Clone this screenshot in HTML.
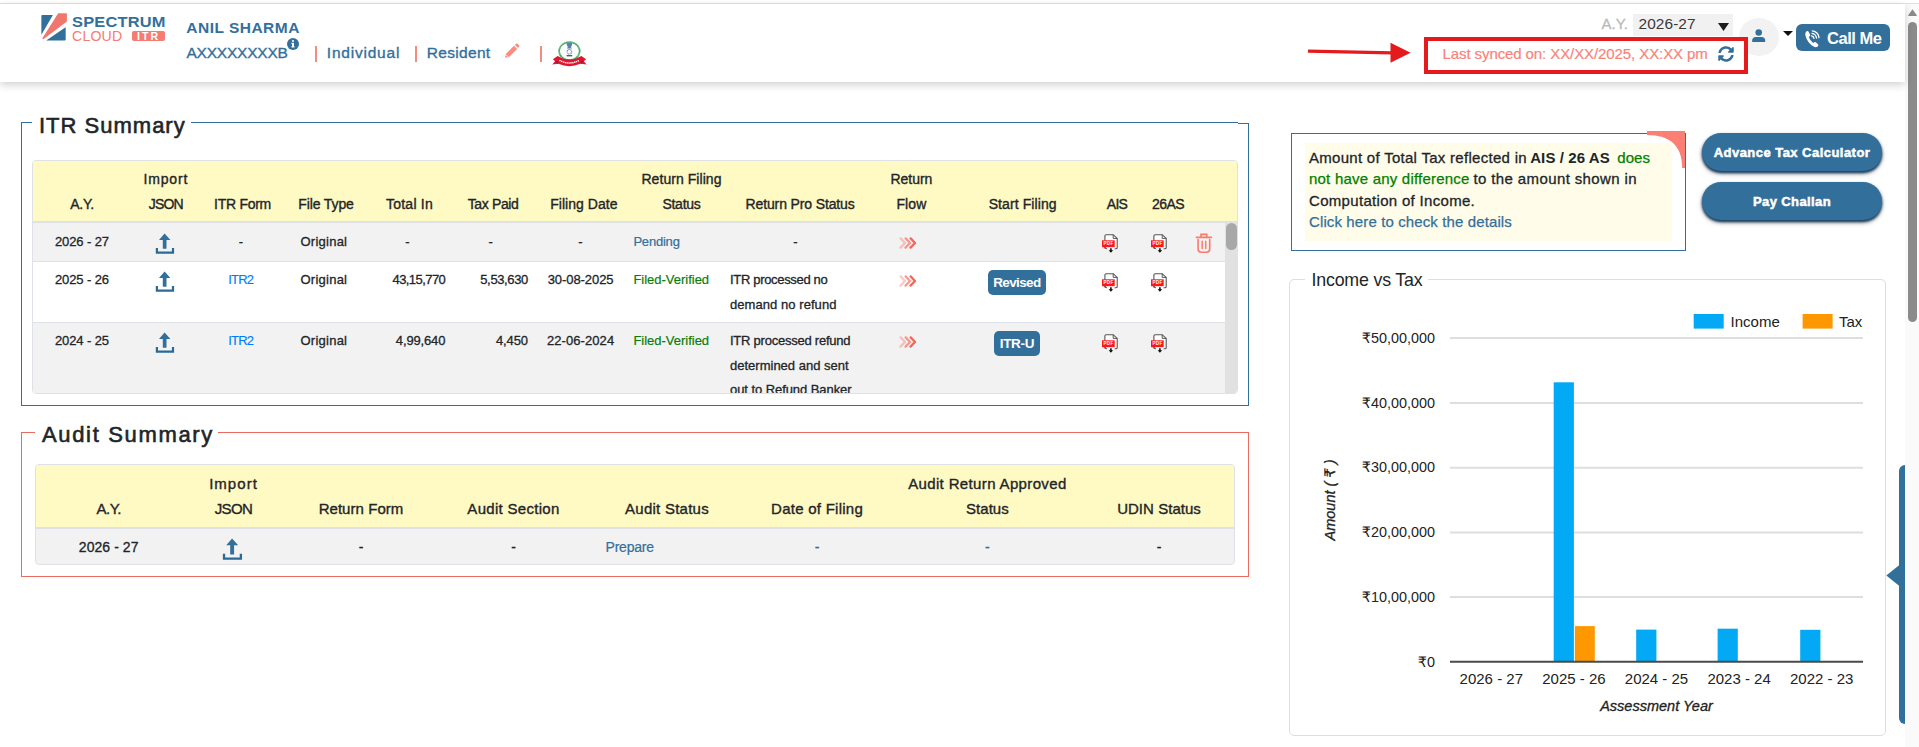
<!DOCTYPE html>
<html lang="en">
<head>
<meta charset="utf-8">
<title>Spectrum Cloud ITR - Dashboard</title>
<style>
*{box-sizing:border-box;margin:0;padding:0}
html,body{width:1919px;height:747px;overflow:hidden;background:#fff}
body{position:relative;font-family:"Liberation Sans","DejaVu Sans",sans-serif;color:#212529;font-size:14px}
.a{position:absolute}
.t{position:absolute;white-space:nowrap;line-height:1}
.sb{-webkit-text-stroke:0.35px currentColor}
.blue{color:#336f9b}
.coral{color:#f47c72}
svg{position:absolute;overflow:visible}
/* header */
#topline{left:0;top:3px;width:1919px;height:1px;background:#dfe1df}
#header{left:0;top:4px;width:1905px;height:78px;background:#fff;box-shadow:0 3px 8px rgba(0,0,0,.18)}
#vscroll{left:1905px;top:4px;width:14px;height:743px;background:#fafafa}
#vthumb{left:1908px;top:22px;width:9px;height:300px;border-radius:5px;background:#8b8b8b}
/* fieldsets */
.fs{position:absolute;border:1px solid #336f9b}
.lg{position:absolute;background:#fff;white-space:nowrap;line-height:1;color:#212529}
.th{position:absolute;white-space:nowrap;line-height:1;font-size:14px;color:#212529;transform:translateX(-50%);-webkit-text-stroke:0.35px currentColor}
.td{position:absolute;white-space:nowrap;line-height:1;font-size:13px;color:#212529;-webkit-text-stroke:0.3px currentColor}
.c{transform:translateX(-50%)}
.r{transform:translateX(-100%)}
.btn{position:absolute;background:#336f9b;color:#fff;border-radius:5px;font-weight:bold;text-align:center;white-space:nowrap}
</style>
</head>
<body>
<div class="a" id="topline"></div>
<div class="a" id="vscroll"></div>
<svg style="left:1908px;top:9px" width="9" height="7" viewBox="0 0 9 7"><path d="M4.5 0.3 L8.8 6.3 Q9 7 8.3 7 L0.7 7 Q0 7 0.2 6.3 Z" fill="#8b8b8b"/></svg>
<div class="a" id="vthumb"></div>

<!-- HEADER -->
<div class="a" id="header"></div>
<div id="hdr">
<!-- logo -->
<svg style="left:41px;top:13px" width="27" height="28" viewBox="0 0 27 28">
  <path d="M1.2 1.9 L11.9 1.9 L0.4 21.8 L0.4 2.7 Q0.4 1.9 1.2 1.9 Z" fill="#336f9b"/>
  <path d="M17.2 0.2 L25 0.2 Q25.9 0.2 25.9 1.1 L25.9 8.6 L2.4 26.2 L1.2 25.6 Z" fill="#f0776d"/>
  <path d="M24.2 14.4 Q24.7 14.2 24.7 14.9 L24.7 26.5 Q24.7 27.4 23.8 27.4 L5.2 27.4 Z" fill="#336f9b"/>
</svg>
<span class="t" id="lg1" style="left:72.2px;top:14.1px;font-size:15px;font-weight:bold;color:#336f9b;letter-spacing:0.2px;transform:scaleX(1.093);transform-origin:0 0">SPECTRUM</span>
<span class="t" id="lg2" style="left:72px;top:28.9px;font-size:14.4px;color:#f47c72;letter-spacing:0.2px;transform:scaleX(0.98);transform-origin:0 0">CLOUD</span>
<div class="a" style="left:132px;top:31px;width:33px;height:10px;border-radius:2px;background:#f47c72"></div>
<span class="t" id="lg3" style="left:137px;top:30.8px;font-size:10.6px;font-weight:bold;color:#fff;letter-spacing:2.1px">ITR</span>

<span class="t blue" id="nm" style="left:186.3px;top:20.1px;font-size:15.5px;font-weight:bold;letter-spacing:0.489px">ANIL SHARMA</span>
<span class="t blue sb" id="pan" style="left:186.5px;top:44.8px;font-size:15.5px;letter-spacing:-0.221px">AXXXXXXXXB</span>
<svg style="left:287px;top:38px" width="12" height="12" viewBox="0 0 12 12"><circle cx="6" cy="6" r="6" fill="#336f9b"/><rect x="5" y="5" width="2" height="4.2" fill="#fff"/><rect x="4.3" y="8.4" width="3.4" height="1" fill="#fff"/><rect x="4.3" y="4.8" width="2" height="1" fill="#fff"/><circle cx="6" cy="3" r="1.1" fill="#fff"/></svg>
<div class="a" style="left:315px;top:46px;width:2px;height:16px;background:#f58a80"></div>
<span class="t blue sb" id="ind" style="left:326.8px;top:45.0px;font-size:15.5px;letter-spacing:0.788px">Individual</span>
<div class="a" style="left:415px;top:46px;width:2px;height:16px;background:#f58a80"></div>
<span class="t blue sb" id="res" style="left:426.7px;top:45.0px;font-size:15.5px;letter-spacing:0.331px">Resident</span>
<svg style="left:503.5px;top:42.5px" width="16" height="16" viewBox="0 0 17 17"><path d="M1 15.6 L2 11.6 L10.6 3 L14 6.4 L5.4 15 Z M11.6 2 L12.8 0.8 Q13.6 0.2 14.4 0.9 L16 2.5 Q16.7 3.3 16 4.1 L14.9 5.3 Z" fill="#fa8c82"/><path d="M2.2 12.6 L4.4 14.8" stroke="#fff" stroke-width="0.9"/></svg>
<div class="a" style="left:540px;top:46px;width:2px;height:16px;background:#f58a80"></div>
<!-- emblem -->
<svg style="left:552px;top:41px" width="35" height="25" viewBox="0 0 35 25">
  <ellipse cx="17.4" cy="10.1" rx="10.2" ry="8.9" fill="#fff" stroke="#2fa052" stroke-width="1.8" stroke-dasharray="0.9 0.25"/>
  <path d="M14.6 1.8 Q15.6 1.2 16.3 2 Q17.4 1.1 18.5 2 Q19.2 1.2 20.2 1.8 L20 4.6 L19.2 5 L19.2 6.6 L20 7.4 L14.8 7.4 L15.6 6.6 L15.6 5 L14.8 4.6 Z" fill="#5f7fb2"/>
  <circle cx="17.4" cy="10.7" r="2.3" fill="none" stroke="#6686b8" stroke-width="1.2" stroke-dasharray="0.8 0.4"/>
  <rect x="14.6" y="14.2" width="5.6" height="1.1" fill="#333"/>
  <path d="M0.9 18.3 L5.6 15 Q17.4 22.2 29.4 15 L34 18.3 L31.8 20.2 L34.6 23.4 L28.4 22.8 Q17.4 27.6 6.4 22.8 L0.3 23.4 L3.1 20.2 Z" fill="#e3142d"/>
  <path d="M3.3 20.4 L6.4 22.8 L5.8 19.9 Z M31.6 20.4 L28.4 22.8 L29.2 19.9 Z" fill="#1d3f8f"/>
  <path d="M7.4 19.3 Q17.4 24.6 27.4 19.3" fill="none" stroke="#fff" stroke-width="1.5" stroke-dasharray="1.3 0.6"/>
</svg>

<!-- header right -->
<svg style="left:1306px;top:40px" width="108" height="26" viewBox="0 0 108 26"><path d="M2 9.4 L86 11.2 L86 14.6 L2 12.8 Z" fill="#e41a1c"/><path d="M84.5 2.7 L104.6 12.7 L84.5 22.8 Z" fill="#e41a1c"/></svg>
<div class="a" style="left:1739px;top:18px;width:40px;height:38px;border-radius:50%;background:#f2f2f2"></div>
<div class="a" style="left:1424px;top:37px;width:324px;height:37px;border:4px solid #e41a1c;background:#fff"></div>
<span class="t" id="sync" style="left:1442.5px;top:45.6px;font-size:15px;letter-spacing:-0.091px;color:#f88379;-webkit-text-stroke:0.2px #f88379">Last synced on: XX/XX/2025, XX:XX pm</span>
<svg style="left:1717.5px;top:45.5px" width="16" height="16" viewBox="0 0 512 512"><path fill="#336f9b" d="M370.7 133.300C339.500 104 298.900 88 255.800 88c-77.500 .1-144.300 53.200-162.800 126.900-1.300 5.400-6.100 9.200-11.700 9.200H24.100c-7.500 0-13.200-6.800-11.800-14.200C33.900 94.900 134.800 8 256 8c66.400 0 126.800 26.100 171.300 68.700L463 41C478.100 25.900 504 36.600 504 57.900V192c0 13.300-10.700 24-24 24H345.900c-21.400 0-32.100-25.900-17-41l41.800-41.700zM32 296h134.100c21.400 0 32.100 25.900 17 41l-41.800 41.800c31.300 29.300 71.800 45.300 114.900 45.300 77.400-.1 144.300-53.100 162.800-126.800 1.300-5.400 6.100-9.200 11.700-9.200h57.300c7.500 0 13.200 6.800 11.800 14.200C478.100 417.100 377.200 504 256 504c-66.400 0-126.800-26.100-171.300-68.700L49 471c-15.100 15.100-41 4.400-41-16.900V320c0-13.300 10.700-24 24-24z"/></svg>

<span class="t" id="ay" style="left:1601.5px;top:15.9px;font-size:15px;color:#b9b9b9;-webkit-text-stroke:0.3px #b9b9b9">A.Y.</span>
<div class="a" style="left:1633px;top:14px;width:100px;height:22px;background:#f1f1f1"></div>
<span class="t" id="aysel" style="left:1638.5px;top:15.8px;font-size:15.4px;color:#3a3a3a;letter-spacing:0.1px">2026-27</span>
<svg style="left:1718px;top:23px" width="11" height="8" viewBox="0 0 11 8"><path d="M0 0 L11 0 L5.5 8 Z" fill="#1c1c1c"/></svg>
<svg style="left:1752px;top:29px" width="13.4" height="13.6" viewBox="0 0 14 14"><circle cx="7" cy="3.6" r="3.4" fill="#336f9b"/><path d="M0.2 13.6 L0.2 12 Q0.2 8.2 4.2 8.2 L9.8 8.2 Q13.8 8.2 13.8 12 L13.8 13.6 Z" fill="#336f9b"/></svg>
<svg style="left:1783px;top:31px" width="10" height="5" viewBox="0 0 10 5"><path d="M0 0 L10 0 L5 5 Z" fill="#111"/></svg>
<div class="btn" style="left:1796px;top:24px;width:94px;height:27px;border-radius:6px"></div>
<svg style="left:1804.3px;top:29.6px" width="17" height="18" viewBox="0 0 17 18" fill="none">
  <path d="M2.2 1.6 Q3.6 0.2 4.6 1.8 L6 4.4 Q6.5 5.5 5.5 6.4 L4.7 7.1 Q6 10.6 9.2 13 L10.2 12.3 Q11.2 11.6 12.1 12.4 L14 14.2 Q15 15.4 13.7 16.5 Q11.9 17.9 9.6 16.6 Q3.4 12.8 1.5 6 Q0.8 3.1 2.2 1.6 Z" fill="#fff"/>
  <path d="M7.6 5.8 Q9.6 6.3 10 8.4" stroke="#fff" stroke-width="1.3" stroke-linecap="round"/>
  <path d="M8 3.3 Q11.9 4 12.5 8" stroke="#fff" stroke-width="1.3" stroke-linecap="round"/>
  <path d="M8.3 0.8 Q14.2 1.6 15 7.6" stroke="#fff" stroke-width="1.3" stroke-linecap="round"/>
</svg>
<span class="t" id="callme" style="left:1827.1px;top:29.6px;font-size:16.5px;font-weight:bold;color:#fff;letter-spacing:-0.5px">Call Me</span>
</div>

<svg width="0" height="0" style="left:0;top:0"><defs>
<symbol id="up" viewBox="0 0 20 21"><path d="M9.6 0.5 L15.4 7 L11.5 7 L11.5 15.7 L7.8 15.7 L7.8 7 L4 7 Z" fill="#336f9b"/><path d="M1.9 15 L1.9 19.6 L18 19.6 L18 15" fill="none" stroke="#2a6a98" stroke-width="2.2"/></symbol>
<symbol id="chev" viewBox="0 0 18 12"><g fill="none" stroke="#f4675a" stroke-width="2.3" stroke-linecap="round" stroke-linejoin="round"><path d="M1.7 1.4 L6 6 L1.5 10.6" opacity=".35"/><path d="M6.7 1.4 L11 6 L6.5 10.6" opacity=".65"/><path d="M11.7 1.4 L16 6 L11.5 10.6"/></g></symbol>
<symbol id="pdf" viewBox="0 0 18 20"><path d="M3.9 15.6 L3.9 3 Q3.9 1.7 5.2 1.7 L12.2 1.7 L16.2 5.4 L16.2 14.4 Q16.2 15.7 14.9 15.7 L13.6 15.7" fill="#fff" stroke="#555" stroke-width="1.1"/><path d="M12.2 1.7 L12.2 5.4 L16.2 5.4" fill="none" stroke="#555" stroke-width="1"/><path d="M3.9 13.5 Q3.9 15.7 5.9 15.7" fill="none" stroke="#555" stroke-width="1.1"/><rect x="1" y="7.3" width="12.7" height="6.9" fill="#ff1616"/><text x="7.5" y="12.4" font-family="Liberation Sans, sans-serif" font-size="4.5" font-weight="bold" fill="#fff" text-anchor="middle" letter-spacing="0.3">PDF</text><path d="M9.1 15.2 h1.6 v2 h1.5 l-2.3 2.6 l-2.3 -2.6 h1.5 z" fill="#111"/></symbol>
<symbol id="trash" viewBox="0 0 18 20"><g fill="none" stroke="#fa7a6c" stroke-width="1.6" stroke-linecap="round"><path d="M1.4 4.4 L16.4 4.4"/><path d="M6 4.2 L6 1.4 L11.8 1.4 L11.8 4.2" stroke-linecap="butt"/><path d="M3.1 6.6 L3.1 16 Q3.1 19.2 6.3 19.2 L11.5 19.2 Q14.7 19.2 14.7 16 L14.7 6.6"/><path d="M7.2 8.2 L7.2 15.4 M10.7 8.2 L10.7 15.4" stroke-width="1.5"/></g></symbol>
</defs></svg>

<!-- ITR SUMMARY -->
<div class="fs" style="left:21px;top:122px;width:1228px;height:284px"></div>
<div class="a" style="left:1238px;top:122px;width:11px;height:1px;background:#fff"></div><div class="a" style="left:1238px;top:123px;width:11px;height:1px;background:#336f9b"></div>
<div class="lg sb" id="itrlg" style="left:32px;top:107.3px;width:159px;height:32px;font-size:22px;padding:7.6px 0 0 7px;-webkit-text-stroke:0.6px #212529;letter-spacing:1.002px">ITR Summary</div>
<div class="a" id="itrtbl" style="left:32px;top:160px;width:1206px;height:234px;border:1px solid #dee2e6;border-radius:4px;overflow:hidden;background:#fff">
  <div class="a" style="left:0;top:0;width:1206px;height:60px;background:#fff9c4"></div>
  <div class="a" style="left:0;top:60px;width:1206px;height:2px;background:#dee2e6"></div>
  <div class="a" style="left:0;top:62px;width:1193px;height:38px;background:#f2f2f2"></div>
  <div class="a" style="left:0;top:100px;width:1193px;height:1px;background:#dee2e6"></div>
  <div class="a" style="left:0;top:161px;width:1193px;height:1px;background:#dee2e6"></div>
  <div class="a" style="left:0;top:162px;width:1193px;height:72px;background:#f2f2f2"></div>
  <div class="a" style="left:1192px;top:61px;width:13px;height:173px;background:#e1e1e1"></div>
  <div class="a" style="left:1192.5px;top:61.7px;width:11.5px;height:27px;border-radius:6px;background:#a8a8a8"></div>
</div>
<span class="th" id="h0b" style="left:82.1px;top:197px;letter-spacing:-0.252px">A.Y.</span>
<span class="th" id="h1a" style="left:165.8px;top:171.9px;letter-spacing:0.842px">Import</span>
<span class="th" id="h1b" style="left:165.8px;top:197px;letter-spacing:-0.781px">JSON</span>
<span class="th" id="h2b" style="left:242.5px;top:197px;letter-spacing:-0.273px">ITR Form</span>
<span class="th" id="h3b" style="left:326px;top:197px;letter-spacing:-0.106px">File Type</span>
<span class="th" id="h4b" style="left:409.5px;top:197px;letter-spacing:0.237px">Total In</span>
<span class="th" id="h5b" style="left:493.1px;top:197px;letter-spacing:-0.358px">Tax Paid</span>
<span class="th" id="h6b" style="left:583.9px;top:197px;letter-spacing:0.048px">Filing Date</span>
<span class="th" id="h7a" style="left:681.5px;top:171.9px;letter-spacing:0.06px">Return Filing</span>
<span class="th" id="h7b" style="left:681.5px;top:197px;letter-spacing:-0.241px">Status</span>
<span class="th" id="h8b" style="left:800.1px;top:197px;letter-spacing:-0.13px">Return Pro Status</span>
<span class="th" id="h9a" style="left:911.4px;top:171.9px;letter-spacing:-0.006px">Return</span>
<span class="th" id="h9b" style="left:911.4px;top:197px;letter-spacing:0.079px">Flow</span>
<span class="th" id="h10b" style="left:1022.7px;top:197px;letter-spacing:0.089px">Start Filing</span>
<span class="th" id="h11b" style="left:1117px;top:197px;letter-spacing:-0.739px">AIS</span>
<span class="th" id="h12b" style="left:1168px;top:197px;letter-spacing:-0.517px">26AS</span>
<div class="a" id="itrbody" style="left:34px;top:223px;width:1191px;height:170px;overflow:hidden"><div class="a" style="left:-34px;top:-223px;width:1300px;height:500px">
<span class="td c" id="r0ay" style="left:82px;top:235.4px;letter-spacing:-0.105px">2026 - 27</span>
<svg style="left:154.9px;top:232.5px" width="20" height="21"><use href="#up"/></svg>
<span class="td c" style="left:241px;top:235.4px">-</span>
<span class="td c" id="r0ft" style="left:323.9px;top:235.4px;letter-spacing:0.243px">Original</span>
<span class="td c" style="left:407.5px;top:235.4px">-</span><span class="td c" style="left:490.7px;top:235.4px">-</span><span class="td c" style="left:580.4px;top:235.4px">-</span>
<span class="td" id="r0st" style="left:633.4px;top:235.4px;color:#336f9b;-webkit-text-stroke:0.2px #336f9b;letter-spacing:-0.203px">Pending</span>
<span class="td c" style="left:795.4px;top:235.4px">-</span>
<svg style="left:899.3px;top:237.0px" width="18" height="12"><use href="#chev"/></svg>
<svg style="left:1101.1px;top:232.7px" width="18" height="20"><use href="#pdf"/></svg>
<svg style="left:1150.2px;top:232.7px" width="18" height="20"><use href="#pdf"/></svg>
<svg style="left:1195px;top:232.8px" width="18" height="20"><use href="#trash"/></svg>
<span class="td c" id="r1ay" style="left:82px;top:273.0px;letter-spacing:-0.105px">2025 - 26</span>
<svg style="left:154.9px;top:271.3px" width="20" height="21"><use href="#up"/></svg>
<span class="td c" id="r1form" style="left:240.8px;top:273.0px;color:#007bff;-webkit-text-stroke:0.15px #007bff;letter-spacing:-0.791px">ITR2</span>
<span class="td c" id="r1ft" style="left:323.9px;top:273.0px;letter-spacing:0.243px">Original</span>
<span class="td r" id="r1tin" style="left:445.3px;top:273.0px;letter-spacing:-0.555px">43,15,770</span><span class="td r" id="r1tax" style="left:528px;top:273.0px;letter-spacing:-0.358px">5,53,630</span><span class="td c" id="r1dt" style="left:580.6px;top:273.0px;letter-spacing:-0.067px">30-08-2025</span>
<span class="td" id="r1st" style="left:633.4px;top:273.0px;color:#0a7d0a;-webkit-text-stroke:0.2px #0a7d0a;letter-spacing:-0.013px">Filed-Verified</span>
<span class="td" id="r1p0" style="left:730px;top:273.0px;letter-spacing:-0.327px">ITR processed no</span>
<span class="td" id="r1p1" style="left:730px;top:297.55px;letter-spacing:0.058px">demand no refund</span>
<svg style="left:899.3px;top:274.6px" width="18" height="12"><use href="#chev"/></svg>
<div class="btn" id="r1btn" style="left:987.6px;top:270px;width:58.6px;height:25px;border-radius:5px;font-size:13.5px;line-height:26.2px"><span id="b1" style="letter-spacing:-0.63px">Revised</span></div>
<svg style="left:1101.1px;top:271.5px" width="18" height="20"><use href="#pdf"/></svg>
<svg style="left:1150.2px;top:271.5px" width="18" height="20"><use href="#pdf"/></svg>
<span class="td c" id="r2ay" style="left:82px;top:334.0px;letter-spacing:-0.105px">2024 - 25</span>
<svg style="left:154.9px;top:332.4px" width="20" height="21"><use href="#up"/></svg>
<span class="td c" id="r2form" style="left:240.8px;top:334.0px;color:#007bff;-webkit-text-stroke:0.15px #007bff;letter-spacing:-0.791px">ITR2</span>
<span class="td c" id="r2ft" style="left:323.9px;top:334.0px;letter-spacing:0.243px">Original</span>
<span class="td r" id="r2tin" style="left:445.3px;top:334.0px;letter-spacing:-0.144px">4,99,640</span><span class="td r" id="r2tax" style="left:528px;top:334.0px;letter-spacing:-0.087px">4,450</span><span class="td c" id="r2dt" style="left:580.6px;top:334.0px;letter-spacing:0.067px">22-06-2024</span>
<span class="td" id="r2st" style="left:633.4px;top:334.0px;color:#0a7d0a;-webkit-text-stroke:0.2px #0a7d0a;letter-spacing:-0.013px">Filed-Verified</span>
<span class="td" id="r2p0" style="left:730px;top:334.0px;letter-spacing:-0.238px">ITR processed refund</span>
<span class="td" id="r2p1" style="left:730px;top:358.55px;letter-spacing:0.004px">determined and sent</span>
<span class="td" id="r2p2" style="left:730px;top:383.1px;letter-spacing:-0.066px">out to Refund Banker</span>
<svg style="left:899.3px;top:335.6px" width="18" height="12"><use href="#chev"/></svg>
<div class="btn" id="r2btn" style="left:993.6px;top:331px;width:46.7px;height:25px;border-radius:5px;font-size:13.5px;line-height:26.2px"><span id="b2" style="letter-spacing:-0.3px">ITR-U</span></div>
<svg style="left:1101.1px;top:332.59999999999997px" width="18" height="20"><use href="#pdf"/></svg>
<svg style="left:1150.2px;top:332.59999999999997px" width="18" height="20"><use href="#pdf"/></svg>
</div></div>

<!-- AUDIT SUMMARY -->
<div class="fs" style="left:21px;top:432px;width:1228px;height:145px;border-color:#ea6b60"></div>
<div class="lg sb" id="audlg" style="left:35px;top:416.5px;width:183px;height:32px;font-size:22px;padding:7.6px 0 0 7px;-webkit-text-stroke:0.6px #212529;letter-spacing:1.659px">Audit Summary</div>
<div class="a" id="audtbl" style="left:35px;top:464px;width:1200px;height:101px;border:1px solid #dee2e6;border-radius:4px;overflow:hidden;background:#f2f2f2">
  <div class="a" style="left:0;top:0;width:1200px;height:62px;background:#fff9c4"></div>
  <div class="a" style="left:0;top:62px;width:1200px;height:2px;background:#dee2e6"></div>
</div>
<span class="th" id="ah0b" style="left:108.7px;top:501.3px;font-size:15px;letter-spacing:-0.474px">A.Y.</span>
<span class="th" id="ah1a" style="left:233.5px;top:476.3px;font-size:15px;letter-spacing:1.037px">Import</span>
<span class="th" id="ah1b" style="left:233.5px;top:501.3px;font-size:15px;letter-spacing:-0.572px">JSON</span>
<span class="th" id="ah2b" style="left:361px;top:501.3px;font-size:15px;letter-spacing:0.051px">Return Form</span>
<span class="th" id="ah3b" style="left:513.5px;top:501.3px;font-size:15px;letter-spacing:0.301px">Audit Section</span>
<span class="th" id="ah4b" style="left:667px;top:501.3px;font-size:15px;letter-spacing:0.255px">Audit Status</span>
<span class="th" id="ah5b" style="left:817.1px;top:501.3px;font-size:15px;letter-spacing:0.256px">Date of Filing</span>
<span class="th" id="ah6a" style="left:987.4px;top:476.3px;font-size:15px;letter-spacing:0.358px">Audit Return Approved</span>
<span class="th" id="ah6b" style="left:987.4px;top:501.3px;font-size:15px;letter-spacing:0.034px">Status</span>
<span class="th" id="ah7b" style="left:1159px;top:501.3px;font-size:15px;letter-spacing:0.034px">UDIN Status</span>
<span class="td c" id="a0ay" style="left:108.7px;top:540px;font-size:14px;letter-spacing:0.066px">2026 - 27</span>
<svg style="left:222.4px;top:537.9px" width="21" height="22"><use href="#up"/></svg>
<span class="td c" style="left:361px;top:540px;font-size:14px">-</span><span class="td c" style="left:513.5px;top:540px;font-size:14px">-</span>
<span class="td" id="a0prep" style="left:605.6px;top:540px;font-size:14px;color:#336f9b;-webkit-text-stroke:0.2px #336f9b;letter-spacing:-0.235px">Prepare</span>
<span class="td c" style="left:817px;top:540px;font-size:14px;color:#336f9b">-</span><span class="td c" style="left:987.4px;top:540px;font-size:14px;color:#336f9b">-</span><span class="td c" style="left:1159px;top:540px;font-size:14px">-</span>

<!-- RIGHT PANEL -->
<div class="a" style="left:1291px;top:133px;width:395px;height:118px;border:1px solid #336f9b;background:#fff"></div>
<div class="a" style="left:1305px;top:143px;width:367px;height:98px;background:#fffce9"></div>
<svg style="left:1647px;top:131px" width="38" height="37" viewBox="0 0 38 37"><path d="M0 0 L38 0 L38 37 L35.2 37 C35.2 15.2 23.4 4.1 0 4.1 Z" fill="#fb7f73"/></svg>
<span class="t" id="i1a" style="left:1309px;top:149.5px;font-size:15px;-webkit-text-stroke:0.3px #212529;letter-spacing:0.286px">Amount of Total Tax reflected in</span>
<span class="t" id="i1b" style="left:1530.2px;top:149.5px;font-size:15px;font-weight:bold;letter-spacing:0.096px">AIS / 26 AS</span>
<span class="t" id="i1c" style="left:1617.2px;top:149.5px;font-size:15px;color:#008000;-webkit-text-stroke:0.25px #008000;letter-spacing:0.123px">does</span>
<span class="t" id="i2a" style="left:1309px;top:170.9px;font-size:15px;color:#008000;-webkit-text-stroke:0.25px #008000;letter-spacing:0.215px">not have any difference</span>
<span class="t" id="i2b" style="left:1473.5px;top:170.9px;font-size:15px;-webkit-text-stroke:0.3px #212529;letter-spacing:0.381px">to the amount shown in</span>
<span class="t" id="i3" style="left:1309px;top:192.6px;font-size:15px;-webkit-text-stroke:0.3px #212529;letter-spacing:0.311px">Computation of Income.</span>
<span class="t" id="i4" style="left:1309px;top:213.8px;font-size:15px;color:#336f9b;-webkit-text-stroke:0.25px #336f9b;letter-spacing:0.118px">Click here to check the details</span>

<div class="btn" style="left:1702px;top:133px;width:180px;height:38px;border-radius:19px;box-shadow:0 2px 2.5px 0.3px #193f60,0 3px 5px rgba(0,0,0,.28);font-size:13px;line-height:39.6px;-webkit-text-stroke:0.5px #fff"><span id="bt1" style="letter-spacing:0.465px">Advance Tax Calculator</span></div>
<div class="btn" style="left:1702px;top:182px;width:180px;height:38px;border-radius:19px;box-shadow:0 2px 2.5px 0.3px #193f60,0 3px 5px rgba(0,0,0,.28);font-size:13px;line-height:39.6px;-webkit-text-stroke:0.5px #fff"><span id="bt2" style="letter-spacing:0.389px">Pay Challan</span></div>

<!-- chart -->
<div class="a" style="left:1289px;top:279px;width:597px;height:457px;border:1px solid #dedede;border-radius:5px"></div>
<div class="lg" id="chlg" style="left:1305px;top:266px;width:123px;height:26px;font-size:17.8px;padding:5.6px 0 0 6.5px;letter-spacing:-0.186px">Income vs Tax</div>
<svg id="chart" style="left:1290px;top:280px" width="596" height="455" viewBox="1290 280 596 455" font-family="Liberation Sans, DejaVu Sans, sans-serif">
  <g stroke="#dedede" stroke-width="2">
    <line x1="1450" y1="338" x2="1863" y2="338"/><line x1="1450" y1="402.9" x2="1863" y2="402.9"/><line x1="1450" y1="467.7" x2="1863" y2="467.7"/><line x1="1450" y1="532.4" x2="1863" y2="532.4"/><line x1="1450" y1="597.1" x2="1863" y2="597.1"/>
  </g>
  <rect x="1553.7" y="382.3" width="20.2" height="279.7" fill="#03a9f4"/>
  <rect x="1575" y="626.1" width="19.8" height="35.9" fill="#ff9800"/>
  <rect x="1636.2" y="629.6" width="20.2" height="32.4" fill="#03a9f4"/>
  <rect x="1717.6" y="628.7" width="20.2" height="33.3" fill="#03a9f4"/>
  <rect x="1800.2" y="629.8" width="20.2" height="32.2" fill="#03a9f4"/>
  <line x1="1450" y1="661.7" x2="1863" y2="661.7" stroke="#4a4a4a" stroke-width="2"/>
  <rect x="1693.7" y="314" width="30" height="14.6" fill="#03a9f4"/><rect x="1802.6" y="314" width="30" height="14.6" fill="#ff9800"/>
  <g font-size="15" fill="#222">
    <text id="lgi" x="1730.6" y="326.7">Income</text><text id="lgt" x="1839" y="326.7">Tax</text>
    <g text-anchor="end" font-size="14.4">
      <text x="1435" y="342.7">&#8377;50,00,000</text><text x="1435" y="407.5">&#8377;40,00,000</text><text x="1435" y="472.3">&#8377;30,00,000</text><text x="1435" y="537.1">&#8377;20,00,000</text><text x="1435" y="601.9">&#8377;10,00,000</text><text x="1435" y="666.8">&#8377;0</text>
    </g>
    <g text-anchor="middle">
      <text x="1491.3" y="684">2026 - 27</text><text x="1573.9" y="684">2025 - 26</text><text x="1656.5" y="684">2024 - 25</text><text x="1739.1" y="684">2023 - 24</text><text x="1821.7" y="684">2022 - 23</text>
      <text x="1656.5" y="710.5" font-style="italic" font-size="14.5" stroke="#222" stroke-width="0.3">Assessment Year</text>
      <text x="1335" y="500" font-style="italic" font-size="14.5" stroke="#222" stroke-width="0.3" transform="rotate(-90 1335 500)">Amount ( &#8377; )</text>
    </g>
  </g>
</svg>
<!-- side tab -->
<div class="a" style="left:1899px;top:465px;width:6px;height:259px;background:#336f9b;border-radius:6px 0 0 6px"></div>
<svg style="left:1886px;top:564px" width="14" height="23" viewBox="0 0 14 23"><path d="M0.3 11.5 L14 0.5 L14 22.5 Z" fill="#336f9b"/></svg>
</body>
</html>
